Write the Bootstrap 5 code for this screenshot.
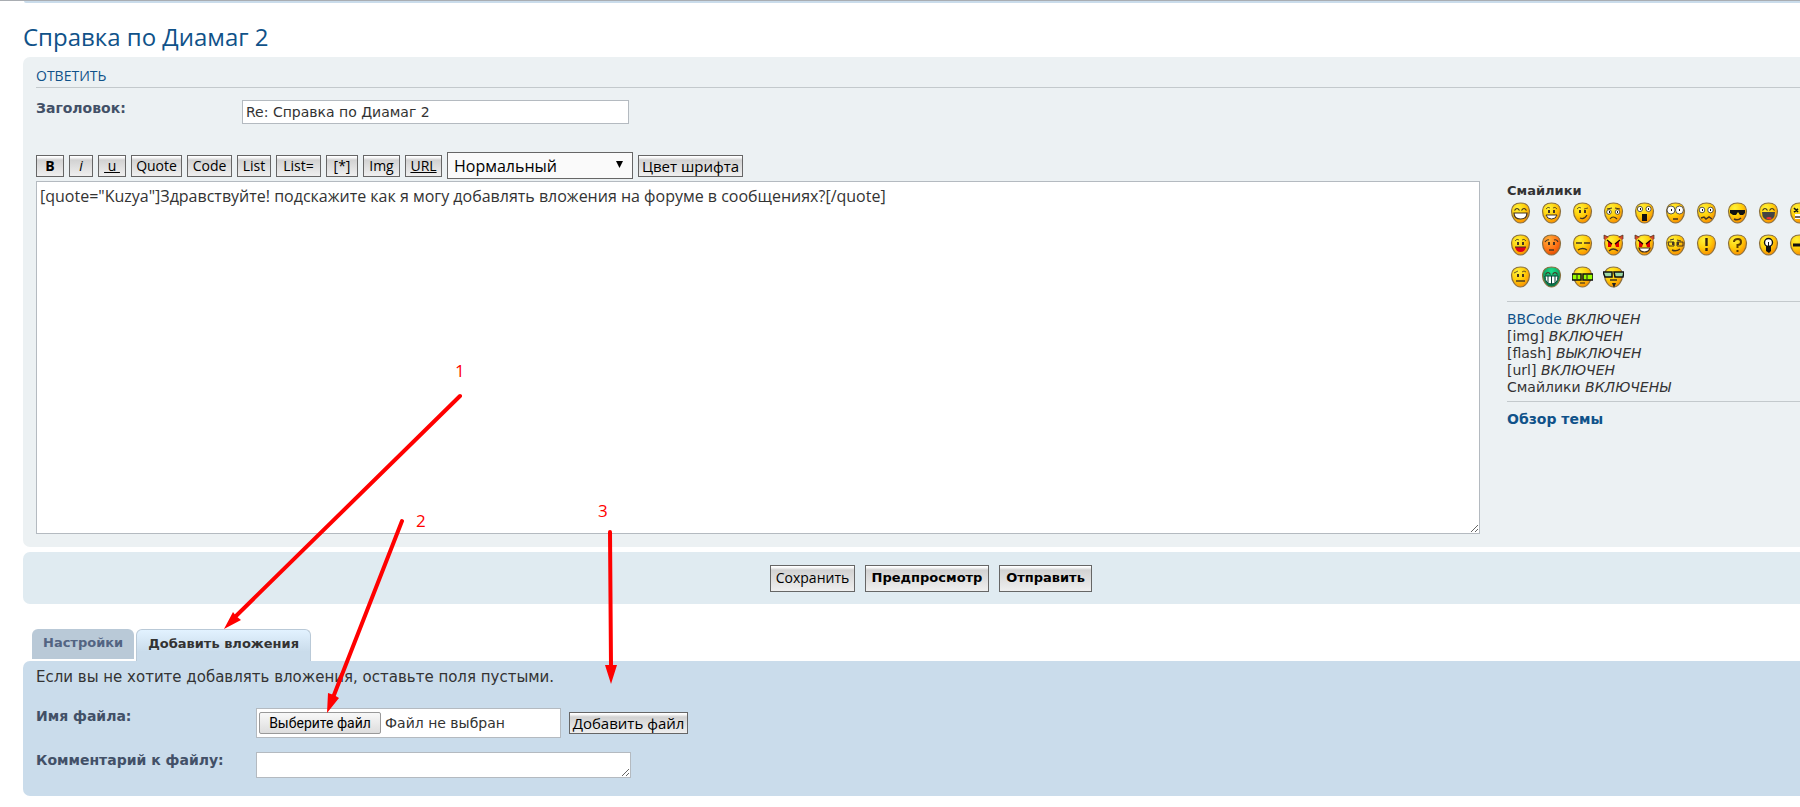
<!DOCTYPE html>
<html lang="ru">
<head>
<meta charset="utf-8">
<meta name="viewport" content="width=device-width, initial-scale=1">
<title>Справка по Диамаг 2</title>
<link href="https://cdn.jsdelivr.net/npm/bootstrap@5.3.0/dist/css/bootstrap.min.css" rel="stylesheet">
<style>
body{font:14px/17px "DejaVu Sans",Verdana,sans-serif;color:#333;overflow-x:hidden;background:#fff}
a{text-decoration:none;color:#105289}
.page-wrap{padding-left:23px;margin-right:-39px}
.top-line{border-top:1px solid #a9adb2;height:9px}
.top-strip{height:2px;margin-left:24px;background:#cadceb;border-radius:0 0 0 6px}
.topic-title{font:24px/28px "Open Sans",sans-serif;color:#105289;margin:0;padding:14px 0 6px}
.forum-panel{border-radius:7px;padding:8px 13px 13px}
.bg-post{background:#ecf1f3}
.bg-submit{background:#e0ebf1;height:52px;margin-top:5px;gap:10px;padding:0}
.bg-attach{background:#cadceb;min-height:135px;padding-top:8px}
.panel-title{font:14px/22px "Open Sans",sans-serif;color:#105289;margin:0;border-bottom:1px solid #c3c9cc}
.field-name{font-weight:700;color:#425067}
.forum-input{border:1px solid #b4bac0;border-radius:0;background:#fff;color:#333;padding:2px 3px;font:14px/18px "DejaVu Sans",sans-serif;display:block}
.subject-row{margin-top:12px;margin-bottom:28px}
.subject-col{width:206px}
.file-col{width:220px}
.subject-input{width:387px;height:24px}
.toolbar-row{gap:5px;margin-bottom:2px}
.post-btn{border:1px solid #666;border-radius:0;height:22px;padding:0;color:#000;font:14px/18px "Open Sans",sans-serif;background:linear-gradient(#fff 0,#fff 1px,#d2d2d2 4px,#efefef 100%);white-space:nowrap;text-align:center}
.btn-s{width:28px}.btn-i{width:24px}.btn-quote{width:51px}.btn-code{width:45px}.btn-list{width:34px}.btn-olist{width:45px}.btn-star{width:32px}.btn-m{width:37px}
.btn-color{width:105px;font-size:15px}
.btn-add{width:119px;font-size:15px;margin:4px 0 0 8px}
.submit-btn{height:27px}
.submit-btn.fw-bold{font-family:"DejaVu Sans",sans-serif;font-size:13px}
.btn-save{width:85px}.btn-preview{width:124px}.btn-send{width:93px}
.size-select{width:186px;height:27px;border:1px solid #666;border-radius:0;background:#fafafa;color:#000;font:16px/24px "Open Sans",sans-serif;padding:0 6px;appearance:none}
.select-wrap{position:relative}
.select-wrap svg{position:absolute;right:9px;top:9px;pointer-events:none}
.message-text{height:353px;width:100%;font:16px/20px "Open Sans",sans-serif;padding:4px 3px;resize:vertical}
.side-col{width:319px;margin-left:27px}
.side-col hr{margin:0;border-color:#c3c9cc;opacity:1}
.smile-title{line-height:19px;font-size:13px}
.smiles{display:grid;grid-template-columns:repeat(10,31px);width:310px;padding-top:2px;margin-bottom:3px}
.smiles a{height:32px;padding-left:3px}
.smiles svg{display:block}
.status-list{padding:9px 0 5px}
.review-link{padding-top:9px}
.tab-row{margin-top:25px;padding-left:9px;gap:2px}
.forum-tab{font:bold 13px/28px "DejaVu Sans",sans-serif;border-radius:6px 6px 0 0;display:block;padding:0 11px}
.tab-idle{background:#b9c9d7;color:#536482;height:30px;margin-bottom:2px}
.tab-active{background:linear-gradient(#e2f2ff,#cadceb 70%);color:#333;height:32px;border:1px solid #b9c9d7;border-bottom:0}
.attach-hint{font-size:15px;margin:0}
.file-row{margin-top:22px}
.file-box{width:305px;height:30px;padding:3px 2px}
.choose-btn{width:122px;height:22px;border:1px solid #999;border-radius:2px;background:linear-gradient(#f8f8f8,#ddd);font:14px/18px Roboto,sans-serif;color:#000;padding:0}
.comment-row{margin-top:14px}
.comment-text{width:375px;height:26px}
.callouts{position:absolute;left:0;top:0;pointer-events:none}
</style>
</head>
<body>
<div class="position-relative">
<div class="top-line"><div class="top-strip"></div></div>
<main class="page-wrap">
  <h2 class="topic-title"><a href="#">Справка по Диамаг 2</a></h2>
  <form>
  <section class="forum-panel bg-post">
    <h3 class="panel-title">ОТВЕТИТЬ</h3>
    <div class="d-flex subject-row">
      <label class="field-name subject-col" for="subject">Заголовок:</label>
      <input class="forum-input subject-input" id="subject" type="text" value="Re: Справка по Диамаг 2">
    </div>
    <div class="d-flex align-items-center toolbar-row">
      <button type="button" class="post-btn btn-s fw-bold">B</button>
      <button type="button" class="post-btn btn-i fst-italic">i</button>
      <button type="button" class="post-btn btn-s text-decoration-underline">&nbsp;u&nbsp;</button>
      <button type="button" class="post-btn btn-quote">Quote</button>
      <button type="button" class="post-btn btn-code">Code</button>
      <button type="button" class="post-btn btn-list">List</button>
      <button type="button" class="post-btn btn-olist">List=</button>
      <button type="button" class="post-btn btn-star">[*]</button>
      <button type="button" class="post-btn btn-m">Img</button>
      <button type="button" class="post-btn btn-m text-decoration-underline">URL</button>
      <div class="select-wrap">
        <select class="size-select" aria-label="Размер шрифта"><option>Нормальный</option></select>
        <svg width="8" height="8" viewBox="0 0 8 8"><path d="M0 0h7L3.5 7z"/></svg>
      </div>
      <button type="button" class="post-btn btn-color">Цвет шрифта</button>
    </div>
    <div class="d-flex">
      <div class="flex-grow-1"><textarea class="forum-input message-text" aria-label="Сообщение">[quote="Kuzya"]Здравствуйте! подскажите как я могу добавлять вложения на форуме в сообщениях?[/quote]</textarea></div>
      <aside class="side-col flex-shrink-0">
        <div class="fw-bold smile-title">Смайлики</div>
        <div class="smiles" id="smiles"></div>
        <hr>
        <div class="status-list"><a href="#">BBCode</a> <em>ВКЛЮЧЕН</em><br>[img] <em>ВКЛЮЧЕН</em><br>[flash] <em>ВЫКЛЮЧЕН</em><br>[url] <em>ВКЛЮЧЕН</em><br>Смайлики <em>ВКЛЮЧЕНЫ</em></div>
        <hr>
        <a class="fw-bold d-block review-link" href="#">Обзор темы</a>
      </aside>
    </div>
  </section>
  <section class="forum-panel bg-submit d-flex justify-content-center align-items-center">
    <button type="button" class="post-btn submit-btn btn-save">Сохранить</button>
    <button type="button" class="post-btn submit-btn btn-preview fw-bold">Предпросмотр</button>
    <button type="submit" class="post-btn submit-btn btn-send fw-bold">Отправить</button>
  </section>
  <nav class="d-flex align-items-end tab-row">
    <a class="forum-tab tab-idle" href="#">Настройки</a>
    <a class="forum-tab tab-active" href="#">Добавить вложения</a>
  </nav>
  <section class="forum-panel bg-attach">
    <p class="attach-hint">Если вы не хотите добавлять вложения, оставьте поля пустыми.</p>
    <div class="d-flex file-row">
      <label class="field-name file-col" for="upload">Имя файла:</label>
      <div class="forum-input file-box d-flex align-items-center">
        <input type="file" id="upload" class="visually-hidden" tabindex="-1">
        <button type="button" class="choose-btn" onclick="document.getElementById('upload').click()">Выберите файл</button>
        <span class="ms-1">Файл не выбран</span>
      </div>
      <button type="button" class="post-btn btn-add">Добавить файл</button>
    </div>
    <div class="d-flex comment-row">
      <label class="field-name file-col" for="comment">Комментарий к файлу:</label>
      <textarea class="forum-input comment-text" id="comment"></textarea>
    </div>
  </section>
  </form>
</main>
<svg class="callouts" width="700" height="720" viewBox="0 0 700 720" fill="#f00" font-family="Open Sans,sans-serif" font-size="17">
  <g stroke="#f00" stroke-width="4" stroke-linecap="round"><path d="M460 396L236 616M402 521L334 695M610 532L611 666"/></g>
  <path d="M224 629L233 612 236 616 241 620zM327 713L328 693 334 695 339 698zM611 684L605 665H617z"/>
  <text x="455" y="377">1</text><text x="416" y="527">2</text><text x="598" y="517">3</text>
</svg>
</div>
<svg width="0" height="0" class="position-absolute"><defs>
  <radialGradient id="gold" cx=".35" cy=".25" r=".8"><stop offset="0" stop-color="#fff23a"/><stop offset=".5" stop-color="#ffcf0a"/><stop offset="1" stop-color="#f98a00"/></radialGradient>
  <radialGradient id="red" cx=".35" cy=".25" r=".8"><stop offset="0" stop-color="#ffb13a"/><stop offset=".6" stop-color="#ff7416"/><stop offset="1" stop-color="#e04a00"/></radialGradient>
  <radialGradient id="green" cx=".5" cy=".2" r=".8"><stop offset="0" stop-color="#1ce08c"/><stop offset="1" stop-color="#05703f"/></radialGradient>
</defs></svg>
<script src="https://cdn.jsdelivr.net/npm/bootstrap@5.3.0/dist/js/bootstrap.bundle.min.js"></script>
<script>
const line = (d, w = 1.2, c = '#432') => `<path d="${d}" fill="none" stroke="${c}" stroke-width="${w}"/>`;
const fill = (d, c) => `<path d="${d}" fill="${c}"/>`;
const eyes = fill('M7 8h2v3H7zM12 8h2v3h-2z', '#432');
const brows = line('M5 7q2-3 4-1M12 6q2-2 4 1', .8);
const happy = line('M4.500 8.500q2.500-4 5 0M11.500 8.500q2.500-4 5 0');
const round = (r, y) => `<g fill="#fff" stroke="#333" stroke-width=".8"><circle cx="6" cy="${y}" r="${r}"/><circle cx="14.500" cy="${y}" r="${r}"/></g><path d="M6 ${y - 1}h1v2H6zM14 ${y - 1}h1v2h-1z" fill="#111"/>`;
const horns = fill('M1 6V1l5 2zM20 6V1l-5 2z', '#d8492a') + line('M1 5V1l4 2M20 5V1l-4 2', .7);
const evil = fill('M5 7l4 3-1 3H5zM16 7l-4 3 1 3h3z', '#e00000') + line('M4 6l5 4M17 6l-5 4', 1.4, '#200');
const faces = [
  happy + fill('M4 11h13q0 6-6.500 6T4 11z', '#fff') + line('M4 11h13q0 6-6.500 6T4 11z'),
  brows + eyes + fill('M5 13h11q-1 4-5.500 4T5 13z', '#fff') + line('M5 13h11q-1 4-5.500 4T5 13z', 1),
  line('M5 7q2-3 4-1M12 7l4-1', .8) + eyes + line('M8 16q4 2 7-3'),
  line('M4 7l5-1M12 6l5 1') + round(2.3, 10) + line('M7 17q3-4 7 0'),
  round(2.6, 7) + fill('M8 12h5v7H8z', '#111'),
  round(4, 8) + line('M8 17h5', 1.5),
  round(2.8, 8) + line('M5 16l3-1 2 2 3-2 3 2', 1.5),
  fill('M3 8h15v3l-2 2h-3l-2-3-2 3H6L3 11z', '#111') + line('M7 17q4 2 7-1', 1.5),
  happy + fill('M4 10h13q0 8-6.500 8T4 10z', '#444') + fill('M8 16q3-2 6 0-3 3-6 0z', '#e33'),
  line('M5 6l4 4M5 10l4-3M12 8l4-3', 1.6, '#111') + fill('M6 12h10v5H6z', '#fff') + line('M6 15h10', 1.5),
  brows + eyes + fill('M5 13h11q-1 5-5.500 5T5 13z', '#e00018') + line('M5 13h11', 1),
  line('M4 8q2-3 4-2M13 6q3-1 4 2') + eyes + line('M8 16h5', 1.4),
  line('M4 9h6M12 9h6', 1.4) + line('M6 16q5-3 9 0', 1.3),
  horns + evil + line('M6 17q4-4 9 0', 1.3),
  horns + evil + fill('M5 14h11q-1 4-5.500 4T5 14z', '#fff') + line('M5 14h11q-1 4-5.500 4T5 14z'),
  line('M5 6l4-1M12 6l4 1M3 8h6v4H4zM12 8h6v4h-6z', 1) + eyes + line('M7 16q4 2 8-1', 1.4),
  line('M10.500 4v8', 2.400, '#321') + line('M10.500 14v3', 2.400, '#321'),
  line('M7 8q0-3 4-3 3 0 3 3t-3.500 3v3M10.500 16v2', 2, '#5b3c00'),
  '<circle cx="10.500" cy="8.500" r="4" fill="#fff" stroke="#111" stroke-width="1.400"/>' + fill('M8 12h5v5l-2 2-3-2zM10 8h1v4h-1z', '#111'),
  line('M4 11h10', 3, '#111') + fill('M12 6l6 5-6 5z', '#111'),
  line('M4 7l4-2M12 6q2-2 4 0', .8) + eyes + line('M6 15h9', 1.4),
  happy + fill('M4 10h13q0 8-6.500 8T4 10z', '#fff') + line('M4 10h13q0 8-6.500 8T4 10zM7 10v7M10.500 10v8M14 10v7', 1, '#043'),
  '<g fill="#9f0" stroke="#111" stroke-width="1.500"><path d="M0 8h9v6H0zM11 8h10v6H11z"/></g>' + line('M5 9v4M15 9v4') + line('M8 17h5'),
  '<g fill="#9dd9a6" stroke="#111" stroke-width="1.500"><path d="M0 6h9v5H2zM11 6h10l-1 5h-8z"/></g>' + line('M7 14h7', 1.5) + fill('M9 17h4l-2 5z', '#222')
];
document.getElementById('smiles').innerHTML = faces.map((f, i) => {
  const skin = i === 11 ? 'red' : i === 21 ? 'green' : 'gold';
  return `<a href="#" aria-label="Смайлик ${i + 1}"><svg width="21" height="23" viewBox="0 0 21 23"><path d="M10.500 1C16 1 19.500 4 19.500 9c0 6-4 12-9 12s-9-6-9-12c0-5 3.500-8 9-8z" fill="url(#${skin})" stroke="#8a7040" stroke-width="1.200"/>${f}</svg></a>`;
}).join('');
</script>
</body>
</html>
